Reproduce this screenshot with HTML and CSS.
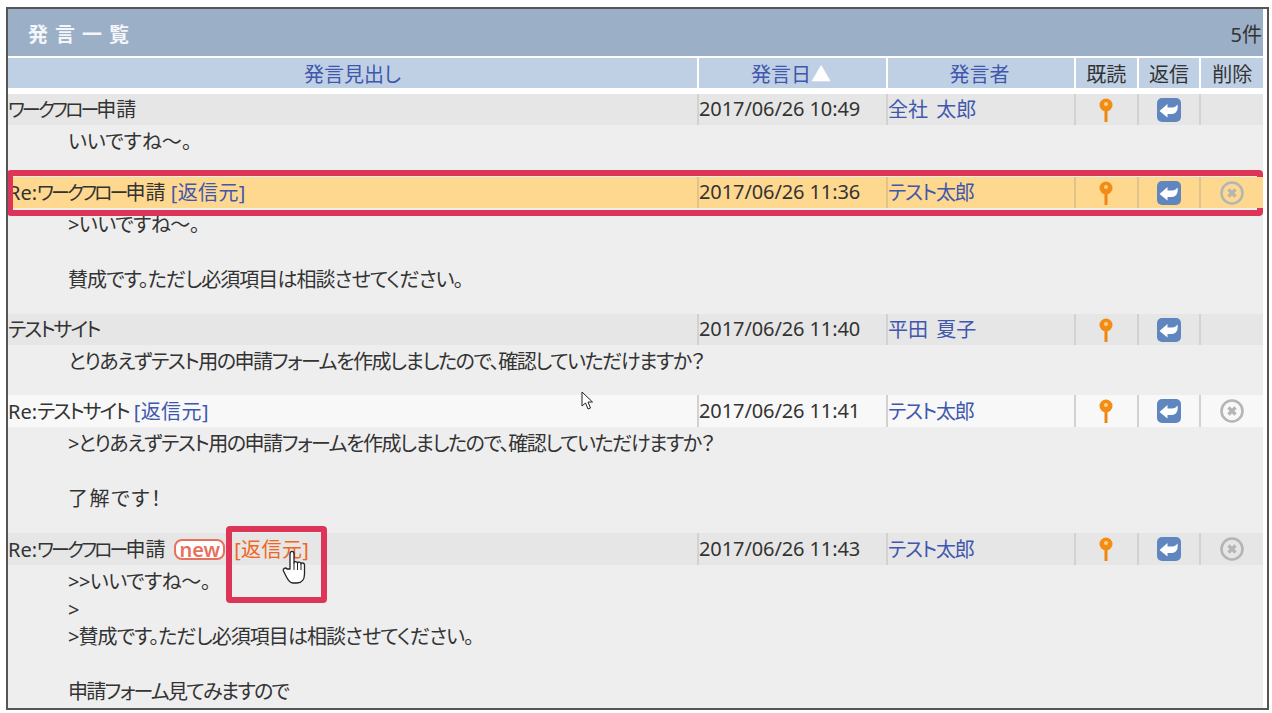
FILE: index.html
```html
<!DOCTYPE html>
<html lang="ja">
<head>
  <meta charset="UTF-8">
  <title>発言一覧</title>
  <link rel="stylesheet" href="styles.css">
</head>
<body>
  <svg class="defs" width="0" height="0">
    <symbol id="pin" viewBox="0 0 14 24">
      <rect x="5.500" y="9" width="3" height="15" fill="#f0860f"/>
      <circle cx="7" cy="7" r="6.500" fill="#f28c14"/>
      <circle cx="7" cy="6" r="2" fill="#ffd08a"/>
    </symbol>
    <symbol id="reply" viewBox="0 0 24 24">
      <rect width="24" height="24" rx="5" fill="#5f86bf"/>
      <path d="M2.500 13 L10.500 6 V9.500 H15 C17.500 9.500 19 8.500 20.500 6.500 C21.500 12 19 16 15 16 H10.500 V19.500 Z" fill="#fff"/>
    </symbol>
    <symbol id="del" viewBox="0 0 24 24">
      <circle cx="12" cy="12" r="10.500" fill="none" stroke="#b5b5b5" stroke-width="2.600"/>
      <path d="M8.500 8.500 L15.500 15.500 M15.500 8.500 L8.500 15.500" stroke="#b5b5b5" stroke-width="3.200"/>
    </symbol>
  </svg>

  <div class="panel">
    <div class="panel-inner">
      <div class="panel-title">
        <span class="panel-name">発言一覧</span>
        <span class="panel-count">5件</span>
      </div>
      <table class="list">
        <colgroup>
          <col class="col-title"><col class="col-date"><col class="col-user">
          <col class="col-icon"><col class="col-icon"><col class="col-icon">
        </colgroup>
        <thead>
          <tr>
            <th><a>発言見出し</a></th>
            <th class="shift"><a>発言日</a><span class="sort">▲</span></th>
            <th class="shift"><a>発言者</a></th>
            <th>既読</th>
            <th>返信</th>
            <th>削除</th>
          </tr>
        </thead>
        <tbody>
          <tr class="head-row">
            <td><span class="kata">ワークフロー</span>申請</td>
            <td class="date">2017/06/26 10:49</td>
            <td><a class="user">全社 太郎</a></td>
            <td class="icon"><svg class="i-pin"><use href="#pin"/></svg></td>
            <td class="icon"><svg class="i-btn"><use href="#reply"/></svg></td>
            <td class="icon"></td>
          </tr>
          <tr class="body-row"><td colspan="6" class="h52">いいですね～。</td></tr>

          <tr class="head-row selected">
            <td>Re:<span class="kata">ワークフロー</span>申請 <a class="origin">[返信元]</a><div class="mark mark-row"></div></td>
            <td class="date">2017/06/26 11:36</td>
            <td><a class="user-kana">テスト太郎</a></td>
            <td class="icon"><svg class="i-pin"><use href="#pin"/></svg></td>
            <td class="icon"><svg class="i-btn"><use href="#reply"/></svg></td>
            <td class="icon"><svg class="i-btn"><use href="#del"/></svg></td>
          </tr>
          <tr class="body-row"><td colspan="6" class="h106"><span class="tight-s">&gt;いいですね～。</span><br><br><span class="tight-m">賛成です。ただし必須項目は相談させてください。</span></td></tr>

          <tr class="head-row">
            <td><span class="kata-test">テストサイト</span></td>
            <td class="date">2017/06/26 11:40</td>
            <td><a class="user">平田 夏子</a></td>
            <td class="icon"><svg class="i-pin"><use href="#pin"/></svg></td>
            <td class="icon"><svg class="i-btn"><use href="#reply"/></svg></td>
            <td class="icon"></td>
          </tr>
          <tr class="body-row"><td colspan="6" class="h50"><span class="tight-l">とりあえずテスト用の申請フォームを作成しましたので、確認していただけますか？</span></td></tr>

          <tr class="head-row light">
            <td>Re:<span class="kata-test">テストサイト</span> <a class="origin">[返信元]</a></td>
            <td class="date">2017/06/26 11:41</td>
            <td><a class="user-kana">テスト太郎</a></td>
            <td class="icon"><svg class="i-pin"><use href="#pin"/></svg></td>
            <td class="icon"><svg class="i-btn"><use href="#reply"/></svg></td>
            <td class="icon"><svg class="i-btn"><use href="#del"/></svg></td>
          </tr>
          <tr class="body-row"><td colspan="6" class="h106"><span class="tight-l">&gt;とりあえずテスト用の申請フォームを作成しましたので、確認していただけますか？</span><br><br><span class="wide">了解です！</span></td></tr>

          <tr class="head-row last">
            <td>Re:<span class="kata">ワークフロー</span>申請<span class="new">new</span><a class="origin hover">[返信元]</a>
              <div class="mark mark-link"></div>
              <svg class="hand" viewBox="0 0 26 36">
                <path d="M8 20 V5 C8 1.500 12 1.500 12 5 V14 C12 12 15.500 12 15.500 14.500 C15.500 12.500 19 12.500 19 15 C19 13.500 22.500 13.500 22.500 16 V25 C22.500 30 20 34 15 34 H11 C8 34 6 31 4.500 28 L1.500 22 C0.500 19.500 3.500 18 5 20 Z" fill="#fff" stroke="#222" stroke-width="1.300" stroke-linejoin="round"/>
                <path d="M12 14 V21 M15.500 14.500 V21 M19 15 V21" stroke="#222" stroke-width="1"/>
              </svg>
            </td>
            <td class="date">2017/06/26 11:43</td>
            <td><a class="user-kana">テスト太郎</a></td>
            <td class="icon"><svg class="i-pin"><use href="#pin"/></svg></td>
            <td class="icon"><svg class="i-btn"><use href="#reply"/></svg></td>
            <td class="icon"><svg class="i-btn"><use href="#del"/></svg></td>
          </tr>
          <tr class="body-row"><td colspan="6"><span class="tight-s">&gt;&gt;いいですね～。</span><br>&gt;<br><span class="tight-m">&gt;賛成です。ただし必須項目は相談させてください。</span><br><br><span class="tight-x">申請フォーム見てみますので</span></td></tr>
        </tbody>
      </table>
      <svg class="arrow" viewBox="0 0 14 20">
        <path d="M1 1 V15 L4.500 12 L7 18 L9.500 17 L7 11 H11.500 Z" fill="#fff" stroke="#222" stroke-width="1"/>
      </svg>
    </div>
  </div>
</body>
</html>
```

FILE: styles.css
```css
html, body {
  height: 100%;
}
body {
  margin: 0;
  background: #fff;
  overflow: hidden;
  font-family: "Noto Sans", "Noto Sans CJK JP", sans-serif;
  font-size: 20px;
  color: #333;
  font-feature-settings: "palt";
}
.defs {
  display: block;
  height: 0;
}
.panel {
  position: relative;
  box-sizing: border-box;
  width: 1263px;
  height: 703px;
  margin: 7px 0 0 6px;
  border: 2px solid #555;
  background: #fff;
  overflow: hidden;
}
.panel-inner {
  width: 1255px;
  height: 100%;
  background: #eee;
}
.panel-title {
  display: flex;
  justify-content: space-between;
  align-items: center;
  box-sizing: border-box;
  height: 49px;
  padding-top: 2px;
  background: #9bafc6;
  border-bottom: 2px solid #fff;
}
.panel-name {
  margin-left: 20px;
  color: #f4f6f9;
  font-weight: bold;
  letter-spacing: 7px;
}
.panel-count {
  margin-right: 1px;
}
a {
  color: #3f57ad;
}
.list {
  width: 1255px;
  table-layout: fixed;
  border-collapse: collapse;
}
.col-title { width: 690px; }
.col-date { width: 189px; }
.col-user { width: 188px; }
.col-icon { width: 62.667px; }
th {
  height: 30px;
  padding: 0;
  background: #bfd0e4;
  border-left: 2px solid #fff;
  border-bottom: 6px solid #fff;
  font-weight: normal;
  text-align: center;
}
th:first-child { border-left: 0; }
th.shift { padding-right: 3px; }
.sort {
  color: #fff;
}
.head-row td {
  position: relative;
  height: 31px;
  padding: 0 0 2px;
  box-sizing: border-box;
  background: #e6e6e6;
  border-left: 2px solid #d2d2d2;
  white-space: nowrap;
}
.head-row td:first-child { border-left: 0; }
.head-row td.icon { padding: 0; }
.selected td {
  background: #ffd890;
  border-left-color: #e0c48c;
}
.light td {
  height: 32px;
  background: #f8f8f8;
}
.last td {
  height: 32px;
}
.date {
  letter-spacing: -0.1px;
}
.user {
  word-spacing: 3px;
}
.user-kana {
  letter-spacing: -1.200px;
}
.kata {
  font-size: 19px;
  letter-spacing: -2.900px;
}
.kata-test {
  letter-spacing: -2px;
}
.origin {
  letter-spacing: 0.400px;
}
.icon {
  text-align: center;
  vertical-align: middle;
}
.i-pin {
  display: block;
  width: 14px;
  height: 24px;
  margin: 0 auto;
}
.i-btn {
  display: block;
  width: 24px;
  height: 24px;
  margin: 0 auto;
}
.body-row td {
  padding: 3px 0 0 60px;
  line-height: 27.500px;
  vertical-align: top;
}
.h52 { height: 49px; }
.h106 { height: 103px; }
.h50 { height: 47px; }
.tight-s { letter-spacing: -0.500px; }
.tight-m { letter-spacing: -0.950px; }
.tight-l { letter-spacing: -1.450px; }
.tight-x { letter-spacing: -1.700px; }
.wide { letter-spacing: 1.600px; }
.new {
  display: inline-block;
  margin: 0 9px 0 9px;
  padding: 0 3px;
  border: 2px solid #e8705f;
  border-radius: 8px;
  background: #fff;
  color: #e8705f;
  font-weight: 600;
  font-size: 20px;
  line-height: 17px;
}
.hover {
  color: #f2651d;
}
.mark {
  position: absolute;
  box-sizing: border-box;
  border: 6px solid #dc3558;
  border-radius: 4px;
  pointer-events: none;
}
.mark-row {
  left: -1px;
  top: -7px;
  width: 1256px;
  height: 46px;
}
.mark-link {
  left: 218px;
  top: -7px;
  width: 101px;
  height: 77px;
}
.hand {
  position: absolute;
  left: 274px;
  top: 16px;
  width: 26px;
  height: 36px;
}
.arrow {
  position: absolute;
  left: 573px;
  top: 382px;
  width: 14px;
  height: 20px;
}
```
